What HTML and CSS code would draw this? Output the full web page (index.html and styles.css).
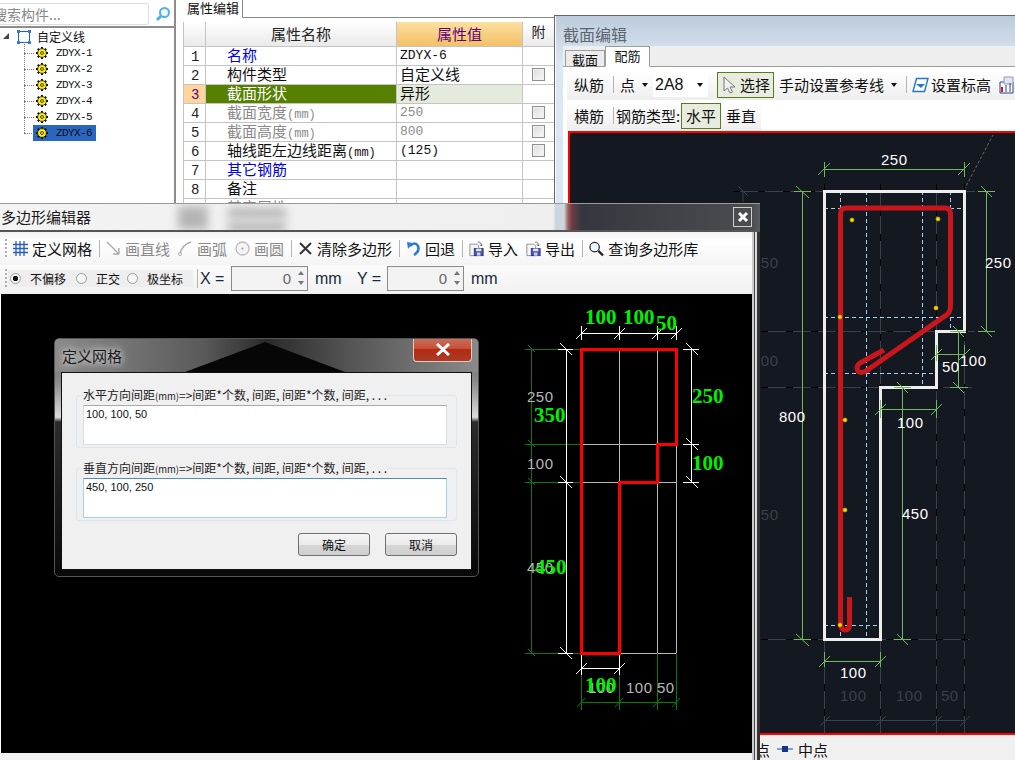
FILE: index.html
```html
<!DOCTYPE html>
<html lang="zh-CN">
<head>
<meta charset="utf-8">
<title>多边形编辑器</title>
<link rel="stylesheet" href="styles.css">
</head>
<body>
<svg class="defs" width="0" height="0" aria-hidden="true">
  <symbol id="gear" viewBox="0 0 12 12">
    <path d="M6 0V12M0 6H12M1.800 1.800L10.200 10.200M10.200 1.800L1.800 10.200" stroke="#111" stroke-width="2"/>
    <circle cx="6" cy="6" r="4.400" fill="#ffef00" stroke="#111" stroke-width=".8"/>
    <circle cx="6" cy="6" r="1.500" fill="#ffef00" stroke="#111" stroke-width=".8"/>
  </symbol>
  <symbol id="disk" viewBox="0 0 17 17">
    <path d="M1 3H9L11 5V16H1Z" fill="#f4f4f4" stroke="#8a8a8a"/>
    <rect x="6" y="8" width="10" height="8" fill="#4a55a8" stroke="#2c3478"/>
    <rect x="8" y="8" width="6" height="3" fill="#dfe3f5"/>
    <rect x="9" y="12.500" width="4" height="3.500" fill="#c9cde8"/>
    <path d="M10 1C13 0 14 2 14 5M14 5L12.500 3.500M14 5L15.500 3.500" fill="none" stroke="#555"/>
  </symbol>
</svg>

<section class="tree-panel">
  <div class="search-row">
    <div class="search-box">搜索构件...</div>
    <svg class="search-icon" width="16" height="16" viewBox="0 0 16 16"><circle cx="9.500" cy="6.500" r="4.500" fill="#eef8ff" stroke="#52b0e8" stroke-width="2"/><path d="M6 10L2 14" stroke="#52b0e8" stroke-width="3"/></svg>
  </div>
  <div class="tree">
    <div class="tree-root">
      <svg class="root-icon" width="16" height="16" viewBox="0 0 16 16"><rect x="2.500" y="2.500" width="11" height="11" fill="none" stroke="#1f5fc0"/><path d="M1 1h3v3H1zM12 1h3v3h-3zM1 12h3v3H1zM12 12h3v3h-3z" fill="#2f7be0"/></svg>
      <span>自定义线</span>
    </div>
    <ul class="tree-list">
      <li><svg width="12" height="12"><use href="#gear"/></svg><span>ZDYX-1</span></li>
      <li><svg width="12" height="12"><use href="#gear"/></svg><span>ZDYX-2</span></li>
      <li><svg width="12" height="12"><use href="#gear"/></svg><span>ZDYX-3</span></li>
      <li><svg width="12" height="12"><use href="#gear"/></svg><span>ZDYX-4</span></li>
      <li><svg width="12" height="12"><use href="#gear"/></svg><span>ZDYX-5</span></li>
      <li class="selected"><svg width="12" height="12"><use href="#gear"/></svg><span>ZDYX-6</span></li>
    </ul>
  </div>
</section>

<section class="prop-panel">
  <div class="prop-tabs"><div class="prop-tab">属性编辑</div></div>
  <table class="prop-table">
    <colgroup><col class="c-idx"><col class="c-name"><col class="c-val"><col class="c-att"></colgroup>
    <thead><tr><th></th><th>属性名称</th><th class="th-val">属性值</th><th class="th-att">附</th></tr></thead>
    <tbody>
      <tr><td class="idx">1</td><td class="name link">名称</td><td class="val mono">ZDYX-6</td><td></td></tr>
      <tr><td class="idx">2</td><td class="name">构件类型</td><td class="val">自定义线</td><td class="chk"><i></i></td></tr>
      <tr class="current"><td class="idx">3</td><td class="name">截面形状</td><td class="val">异形</td><td></td></tr>
      <tr class="muted"><td class="idx">4</td><td class="name">截面宽度<span class="unit-mm">(mm)</span></td><td class="val mono">250</td><td class="chk"><i></i></td></tr>
      <tr class="muted"><td class="idx">5</td><td class="name">截面高度<span class="unit-mm">(mm)</span></td><td class="val mono">800</td><td class="chk"><i></i></td></tr>
      <tr><td class="idx">6</td><td class="name">轴线距左边线距离<span class="unit-mm">(mm)</span></td><td class="val mono">(125)</td><td class="chk"><i></i></td></tr>
      <tr><td class="idx">7</td><td class="name link">其它钢筋</td><td class="val"></td><td></td></tr>
      <tr><td class="idx">8</td><td class="name">备注</td><td class="val"></td><td></td></tr>
      <tr class="muted"><td class="idx"></td><td class="name">其它属性</td><td class="val"></td><td></td></tr>
    </tbody>
  </table>
</section>

<section class="section-win">
  <header class="section-title">截面编辑</header>
  <div class="section-main">
    <div class="section-tabs">
      <div class="stab">截面</div>
      <div class="stab active">配筋</div>
    </div>
    <div class="stb stb-first">
      <span class="w-a">纵筋</span><i class="vsep sa"></i>
      <span class="w-b">点</span><i class="caret cb"></i>
      <div class="combo">2A8<i class="caret"></i></div>
      <div class="toggle tg-sel">
        <svg width="15" height="18" viewBox="0 0 15 18"><path d="M2 1V15L5.500 12L8 17L10.500 16L8 11H13Z" fill="#f1f1f1" stroke="#777"/></svg>
        <span>选择</span>
      </div>
      <span class="w-c">手动设置参考线</span><i class="caret cd"></i><i class="vsep se"></i>
      <svg class="ic-elev" width="17" height="16" viewBox="0 0 17 16"><path d="M4.500 1.500H16L12.500 14.500H1Z" fill="#fff" stroke="#1f78c8" stroke-width="1.400"/><path d="M4 7H13L9 11Z" fill="#1f78c8"/></svg>
      <span class="w-d">设置标高</span>
      <svg class="ic-last" width="15" height="18" viewBox="0 0 15 18"><path d="M1 6H14V17H1Z" fill="#fff" stroke="#22408a"/><path d="M5 1H14V8H5Z" fill="#dfe6f2" stroke="#99a"/><path d="M3 11V16" stroke="#d02020" stroke-width="2"/><path d="M7 9V16M11 7V16" stroke="#22408a"/></svg>
    </div>
    <div class="stb stb-second">
      <span class="w-a">横筋</span><i class="vsep sa2"></i>
      <span class="w-t">钢筋类型:</span>
      <div class="toggle tg-h">水平</div>
      <span class="w-v">垂直</span>
    </div>
    <div class="cad-frame">
      <svg class="cad" width="445" height="600" viewBox="570 133 445 600">
        <g class="axis">
          <path d="M733 191.500H975M761 331.500H975M761 387.500H972M761 639.500H970M824.500 184V733M880.500 184V733M936.500 184V733M964.500 184V733"/>
          <path d="M738 186L748 196M743 191V202"/>
          <path class="axis-diag" d="M964 190L993 135"/>
          <path class="axis-b" d="M733 191.500H975M761 331.500H975M761 387.500H972M761 639.500H970M824.500 184V733M880.500 184V733M936.500 184V733M964.500 184V733"/>
          <path d="M824 720.500H964M820 726L830 716M876 726L886 716M932 726L942 716M960 726L970 716"/>
        </g>
        <path class="hint" d="M824 208.500H964M824 317.500H964M824 373.500H936M824 625.500H880M840.500 191V208M866.500 191V639M922.500 191V387M950.500 191V331M840.500 625V639"/>
        <path class="rebar" d="M849.500 597V624Q849.500 630 845 630Q840.500 630 840.500 622V214Q840.500 208 846 208H945Q950.500 208 950.500 214V306Q950.500 313 945 316L866 371Q858 375 857 368Q857 365 860 363L884 350"/>
        <path class="outline" d="M824.500 191.500H964.500V331.500H936.500V387.500H880.500V639.500H824.500Z"/>
        <path class="dim" d="M824 169.500H964M824.500 162V177M964.500 162V177M818 175L830 163M958 175L970 163M802.500 191V639M794 191.500H811M794 639.500H811M796 186L809 198M796 634L809 646M986.500 191V331M978 191.500H995M978 331.500H995M981 186L992 197M981 326L992 337M958.500 331V387M950 331.500H966M950 387.500H968M953 326L964 337M953 382L964 393M936 354.500H964M936.500 345V361M964.500 345V362M931 360L942 349M959 360L970 349M880 409.500H936M880.500 400V418M936.500 400V418M875 415L886 404M931 415L942 404M902.500 388V639M894 387.500H911M894 639.500H911M897 382L908 393M897 634L908 645M824 661.500H880M824.500 652V667M880.500 652V667M819 667L830 656M875 667L886 656"/>
        <g class="pts">
          <circle cx="852" cy="220" r="2"/><circle cx="938" cy="219" r="2"/><circle cx="936" cy="308" r="2"/><circle cx="840" cy="317" r="2"/><circle cx="845" cy="420" r="2"/><circle cx="845" cy="510" r="2"/><circle cx="840" cy="625" r="2"/>
        </g>
        <g class="cad-t">
          <text x="881" y="165">250</text><text x="985" y="268">250</text><text x="942" y="372">50</text><text x="960" y="366">100</text><text x="897" y="428">100</text><text x="779" y="422">800</text><text x="902" y="519">450</text><text x="840" y="678">100</text>
        </g>
        <g class="cad-d">
          <text x="840" y="701">100</text><text x="896" y="701">100</text><text x="941" y="701">50</text><text x="752" y="268">250</text><text x="752" y="366">100</text><text x="752" y="520">450</text>
        </g>
      </svg>
    </div>
    <div class="section-foot">
      <span>点</span>
      <svg width="16" height="8" viewBox="0 0 16 8"><path d="M0 4H16" stroke="#7f9fd0" stroke-width="2"/><rect x="5" y="1" width="6" height="6" fill="#16348a"/></svg>
      <span>中点</span>
    </div>
  </div>
</section>

<section class="poly-win">
  <header class="poly-title">
    <span class="poly-name">多边形编辑器</span>
    <div class="glass g1"></div><div class="glass g2"></div><div class="glass g3"></div>
    <div class="poly-close"><svg width="12" height="12" viewBox="0 0 12 12"><path d="M2 2L10 10M10 2L2 10" stroke="#fff" stroke-width="3"/></svg></div>
  </header>
  <div class="poly-body">
    <div class="ptb ptb-1">
      <i class="grip"></i>
      <div class="tbtn"><svg width="15" height="15" viewBox="0 0 15 15"><path d="M0 3.500H15M0 7.500H15M0 11.500H15M3 0V15M7 0V15M11 0V15" stroke="#2a5cc0" stroke-width="1.300"/></svg><span>定义网格</span></div>
      <i class="vsep"></i>
      <div class="tbtn off"><svg width="15" height="15" viewBox="0 0 15 15"><path d="M1 1L13 13M13 13V7M13 13H7" fill="none" stroke="#aaa" stroke-width="1.400"/></svg><span>画直线</span></div>
      <div class="tbtn off"><svg width="15" height="15" viewBox="0 0 15 15"><path d="M2 14Q3 4 13 1" fill="none" stroke="#aaa" stroke-width="1.400"/><circle cx="2" cy="13" r="1.500" fill="#fff" stroke="#aaa"/></svg><span>画弧</span></div>
      <div class="tbtn off"><svg width="15" height="15" viewBox="0 0 15 15"><circle cx="7.500" cy="7.500" r="6.500" fill="#f4f4f4" stroke="#bbb" stroke-width="1.300"/><circle cx="7.500" cy="7.500" r="1" fill="#999"/></svg><span>画圆</span></div>
      <i class="vsep"></i>
      <div class="tbtn"><svg width="15" height="15" viewBox="0 0 15 15"><path d="M2 2L13 13M13 2L2 13" stroke="#333" stroke-width="2"/></svg><span>清除多边形</span></div>
      <i class="vsep"></i>
      <div class="tbtn"><svg width="15" height="15" viewBox="0 0 15 15"><path d="M4 5Q9 0 12 5Q14 10 8 14" fill="none" stroke="#2f7fd0" stroke-width="2.600"/><path d="M1 1L7 2L2 8Z" fill="#2f7fd0"/></svg><span>回退</span></div>
      <i class="vsep"></i>
      <div class="tbtn"><svg width="16" height="16"><use href="#disk"/></svg><span>导入</span></div>
      <div class="tbtn"><svg width="16" height="16"><use href="#disk"/></svg><span>导出</span></div>
      <i class="vsep"></i>
      <div class="tbtn"><svg width="16" height="16" viewBox="0 0 16 16"><circle cx="6" cy="6" r="5" fill="#eef6ff" stroke="#222" stroke-width="1.300"/><path d="M10 10L15 15" stroke="#222" stroke-width="2.400"/></svg><span>查询多边形库</span></div>
    </div>
    <div class="ptb ptb-2">
      <i class="grip"></i>
      <div class="radios">
        <label class="radio on"><i></i>不偏移</label>
        <label class="radio"><i></i>正交</label>
        <label class="radio"><i></i>极坐标</label>
      </div>
      <i class="vsep vs2"></i>
      <span class="coord cx">X =</span>
      <div class="spin">0<span class="arrows"><b></b><b></b></span></div>
      <span class="coord unit">mm</span>
      <span class="coord cy">Y =</span>
      <div class="spin">0<span class="arrows"><b></b><b></b></span></div>
      <span class="coord unit">mm</span>
    </div>
    <div class="poly-canvas">
      <svg class="poly-svg" width="751" height="460" viewBox="1 294 751 460">
        <path class="g-line" d="M619.500 349V653M657.500 349V653M676.500 349V653M581 444.500H676M581 482.500H676M581 653.500H676"/>
        <path class="g-dark" d="M531.500 349V653M525 349.500H581M525 444.500H581M525 482.500H581M525 653.500H581M528 345L535 352M528 440L535 447M528 478L535 485M528 649L535 656M581 702.500H676M581.500 653V710M619.500 653V710M657.500 653V710M676.500 653V710M577 707L585 698M615 707L623 698M653 707L661 698M672 707L680 698"/>
        <path class="g-white" d="M581 333.500H676M581.500 326V340M619.500 326V340M657.500 326V340M676.500 326V340M576 339L587 328M614 339L625 328M652 339L663 328M671 339L682 328M566.500 349V653M558 349.500H573M558 482.500H573M558 653.500H573M560 343L572 355M560 476L572 488M560 647L572 659M691.500 349V482M683 349.500H699M683 444.500H699M683 482.500H699M686 343L698 355M686 438L698 450M686 476L698 488M581 668.500H619M581.500 653V675M619.500 653V675M576 674L587 663M614 674L625 663"/>
        <path class="g-red" d="M581.500 349.500H676.500V444.500H657.500V482.500H619.500V653.500H581.500Z"/>
        <g class="t-grey">
          <text x="527" y="402">250</text><text x="527" y="469">100</text><text x="527" y="573">450</text><text x="588" y="693">100</text><text x="626" y="693">100</text><text x="657" y="693">50</text>
        </g>
        <g class="t-green">
          <text x="585" y="324">100</text><text x="623" y="324">100</text><text x="656" y="330">50</text><text x="692" y="403">250</text><text x="692" y="470">100</text><text x="534" y="422">350</text><text x="535" y="574">450</text><text x="585" y="692">100</text>
        </g>
      </svg>
    </div>
    <div class="poly-foot"></div>
  </div>
  <div class="poly-edge"></div>
</section>

<section class="grid-dlg">
  <header class="dlg-title">
    <span class="dlg-name">定义网格</span>
    <div class="dlg-close"><svg width="16" height="13" viewBox="0 0 16 13"><path d="M2 1L14 12M14 1L2 12" stroke="#fff" stroke-width="3"/></svg></div>
  </header>
  <div class="dlg-body">
    <fieldset class="group">
      <legend>水平方向间距<small>(mm)</small>=&gt;间距*个数, 间距, 间距*个数, 间距, . . .</legend>
      <div class="field">100, 100, 50</div>
    </fieldset>
    <fieldset class="group">
      <legend>垂直方向间距<small>(mm)</small>=&gt;间距*个数, 间距, 间距*个数, 间距, . . .</legend>
      <div class="field focus">450, 100, 250</div>
    </fieldset>
    <div class="dlg-actions">
      <button class="btn" type="button">确定</button>
      <button class="btn" type="button">取消</button>
    </div>
  </div>
</section>
</body>
</html>
```
FILE: styles.css
```css
* { box-sizing: border-box; }
html, body { margin: 0; padding: 0; }
body {
  position: relative;
  width: 1015px;
  height: 760px;
  overflow: hidden;
  background: #fff;
  font-family: "Noto Sans CJK SC", "Liberation Sans", sans-serif;
  font-size: 15px;
  line-height: 19px;
  color: #111;
}
i { font-style: normal; display: block; }
svg { display: block; flex: none; }
.defs { position: absolute; }

/* tree */
.tree-panel {
  position: absolute; left: 0; top: 0; width: 176px; height: 203px;
  border-right: 2px solid #8d8d8d;
  background: #fff;
}
.search-row {
  height: 28px; display: flex; align-items: flex-start;
  border-bottom: 2px solid #8d8d8d;
  padding-top: 3px;
}
.search-box {
  width: 149px; height: 22px; border: 1px solid #ddd; border-left: 0; border-radius: 0 3px 3px 0;
  color: #888; font-size: 14px; line-height: 20px; text-indent: -7px; white-space: nowrap; overflow: hidden;
}
.search-icon { margin: 3px 0 0 6px; }
.tree { position: relative; font-size: 12px; }
.tree-root { height: 18px; display: flex; align-items: center; padding-left: 16px; position: relative; }
.tree-root::before {
  content: ""; position: absolute; left: 3px; top: 5px;
  border-style: solid; border-width: 0 0 6px 6px; border-color: transparent transparent #444 transparent;
}
.root-icon { margin-right: 5px; }
.tree-root span { line-height: 16px; font-size: 12px; }
.tree-list {
  list-style: none; margin: -1px 0 0 24px; padding: 0; width: 72px;
  position: relative;
}
.tree-list::before {
  content: ""; position: absolute; left: 0; top: -3px; height: 91px;
  border-left: 1px dotted #777;
}
.tree-list li {
  height: 16px; display: flex; align-items: center; padding-left: 12px; position: relative;
  font: 11px/16px "Liberation Mono", monospace; letter-spacing: -.6px; color: #111;
}
.tree-list li::before {
  content: ""; position: absolute; left: 0; top: 8px; width: 10px;
  border-top: 1px dotted #777;
}
.tree-list li svg { margin-right: 8px; }
.tree-list li.selected { background: linear-gradient(90deg, transparent 9px, #2a66bf 9px); }

/* properties */
.prop-panel { position: absolute; left: 183px; top: 0; width: 372px; height: 203px; overflow: hidden; }
.prop-tabs { height: 18px; border-bottom: 1px solid #888; margin-bottom: 4px; }
.prop-tab {
  width: 60px; height: 18px; background: #fff; border-right: 1px solid #888; border-bottom: 1px solid #fff;
  font-size: 13px; line-height: 16px; padding-left: 4px; white-space: nowrap;
}
.prop-table { border-collapse: collapse; table-layout: fixed; width: 371px; border-left: 1px solid #ccc; }
.c-idx { width: 22px; } .c-name { width: 191px; } .c-val { width: 126px; } .c-att { width: 32px; }
.prop-table th {
  height: 24px; padding: 0; font-weight: 400; font-size: 15px; line-height: 19px;
  background: linear-gradient(#fff, #e9e9e9); border: 1px solid #c4c4c4; border-top: 0; color: #222;
}
.prop-table th.th-val { background: linear-gradient(#fbdf9f, #f3c066); color: #60007f; }
.prop-table th.th-att { vertical-align: top; font-size: 14px; }
.prop-table td {
  height: 19px; padding: 0 0 1px; border: 1px solid #c4c4c4; font-size: 15px; line-height: 16px;
  white-space: nowrap;
}
.prop-table .idx { font: 14px/14px "Liberation Mono", monospace; padding: 3px 0 0 7px; color: #222; }
.prop-table .name { padding-left: 21px; }
.prop-table .val { padding-left: 3px; }
.prop-table .val.mono { font: 13px/16px "Liberation Mono", monospace; padding-top: 1px; padding-bottom: 0; }
.unit-mm { font: 12px/0 "Liberation Mono", monospace; }
.prop-table .link { color: #0000e6; }
.muted .name, .muted .val, .prop-table .muted .val.mono { color: #8a8a8a; }
.current .idx { background: #ffd699; color: #60007f; }
.current .name { background: #558000; color: #fff; }
.current .val { background: #e5ebdc; }
.chk i {
  width: 13px; height: 13px; margin: 1px auto 0 9px;
  border: 1px solid #8e8f8f; background: linear-gradient(135deg, #ddd, #f8f8f8);
  box-shadow: inset 0 0 0 1px #f0f0f0;
}

/* section window */
.section-win {
  position: absolute; left: 554px; top: 15px; width: 461px; height: 745px;
  border-top: 1px solid #666; border-left: 1px solid #666;
  background: linear-gradient(#bccbdb 0, #dbe7f2 46px, #dbe7f2 100%);
  display: flex; flex-direction: column;
  box-shadow: inset 1px 0 0 #fff;
}
.section-title { height: 30px; flex: none; padding: 8px 0 0 8px; color: #5c6670; font-size: 16px; line-height: 20px; }
.section-main { margin-left: 8px; flex: 1; min-height: 0; background: #fff; display: flex; flex-direction: column; }
.section-tabs {
  height: 21px; flex: none; display: flex; align-items: flex-end; padding-left: 2px;
  background: #eee; border-bottom: 1px solid #9a9f9a;
}
.stab {
  width: 40px; height: 17px; margin-bottom: -1px; text-align: center; font-size: 13px; line-height: 17px;
  border: 1px solid #9a9f9a; background: #ececec;
}
.stab.active { width: 45px; height: 21px; margin-left: 0; background: #fff; border-bottom-color: #fff; line-height: 17px; }
.stb { height: 29px; flex: none; display: flex; align-items: center; padding: 0 0 2px 7px; white-space: nowrap; background: linear-gradient(#fff, #eee); margin-left: 4px; }
.stb-first { margin-top: 4px; margin-bottom: 2px; }
.stb-second { width: 194px; }
.vsep { width: 1px; height: 17px; background: #b4b4b4; flex: none; }
.caret { width: 0; height: 0; border: 3px solid transparent; border-top: 4px solid #111; border-bottom: 0; flex: none; }
.w-a { width: 30px; }
.sa { margin: 0 6px 0 9px; }
.w-b { width: 15px; }
.cb { margin: 0 5px 0 7px; }
.combo {
  width: 55px; height: 24px; background: #fff; display: flex; align-items: center; justify-content: space-between;
  font-family: "Liberation Sans", sans-serif; font-size: 16px; padding: 0 5px 0 2px; margin-right: 9px;
}
.toggle { border: 2px solid #5a7a1e; border-width: 1.500px; background: #e8ecdf; display: flex; align-items: center; height: 26px; }
.tg-sel { width: 57px; padding-left: 4px; }
.tg-sel span { margin-left: 3px; }
.w-c { margin-left: 5px; width: 106px; }
.cd { margin: 0 6px 0 6px; }
.se { margin: 0 5px 0 3px; }
.ic-elev { margin-right: 2px; }
.w-d { width: 60px; }
.ic-last { margin-left: 8px; }
.sa2 { margin: 0 2px 0 9px; }
.w-t { width: 64px; }
.tg-h { width: 40px; justify-content: center; margin-left: 1px; }
.w-v { margin-left: 5px; }
.cad-frame { flex: none; height: 604px; background: #141820; border: 2px solid #f00; border-right: 0; margin-left: 5px; }
.cad { background: #141820; }
.axis path { fill: none; stroke: #3a4048; }
.axis .axis-b { stroke: #000; stroke-dasharray: 7 18; }
.axis .axis-diag { stroke: #666; stroke-dasharray: 3 2; }
.hint { fill: none; stroke: #a6d0f2; stroke-dasharray: 4 3; }
.rebar { fill: none; stroke: #c8161c; stroke-width: 5; }
.outline { fill: none; stroke: #eeeeee; stroke-width: 3; }
.dim { fill: none; stroke: #71b85c; }
.pts circle { fill: #ffe000; stroke: #b89a00; stroke-width: .8; }
.cad-t text, .cad-d text { font: 15px "Liberation Sans", sans-serif; letter-spacing: .5px; }
.cad-t text { fill: #fff; }
.cad-d text { fill: #3a4048; }
.section-foot {
  flex: 1; background: #f0f0f0; display: flex; align-items: center; padding: 3px 0 0 192px; gap: 7px; white-space: nowrap;
}
.section-foot svg { margin-right: -2px; }

/* polygon window */
.poly-win {
  position: absolute; left: 0; top: 203px; width: 760px; height: 557px;
  display: grid; grid-template-columns: 752px 8px; grid-template-rows: 29px 1fr;
}
.poly-title {
  grid-column: 1 / 3; position: relative; display: flex; align-items: center; justify-content: space-between;
  border-top: 1px solid #9a9a9a; border-bottom: 2px solid #555; padding: 0 8px 0 1px; overflow: hidden;
  background: linear-gradient(90deg, #f3f3f3 0, #efefef 553px, #c8d4de 556px, #d0d8e0 564px, #a06060 568px, #6a3c44 572px, #34383e 582px, #4a4d50 752px, #5a5d60 760px);
}
.poly-name { position: relative; line-height: 20px; color: #1a1a1a; }
.glass { position: absolute; background: #b5b5b5; filter: blur(5px); }
.g1 { left: 178px; top: 2px; width: 30px; height: 24px; }
.g2 { left: 228px; top: 4px; width: 58px; height: 10px; }
.g3 { left: 228px; top: 18px; width: 58px; height: 10px; }
.poly-close {
  position: relative; width: 19px; height: 20px; display: flex; align-items: center; justify-content: center;
  background: #4a4d50; border: 1px solid #cfcfcf;
}
.poly-body { display: flex; flex-direction: column; min-height: 0; background: #fff; }
.ptb { flex: none; display: flex; align-items: center; white-space: nowrap; }
.ptb-1 { height: 33px; padding: 0 0 0 5px; background: linear-gradient(#f1f1f1, #fff 30%, #f4f4f4); }
.ptb-2 { height: 29px; padding: 0 0 2px 5px; background: linear-gradient(#fbfbfb, #f1f1f1); }
.grip { width: 2px; height: 20px; background: repeating-linear-gradient(#b0b0b0 0 2px, transparent 2px 4px); flex: none; }
.ptb-1 .grip { margin-right: 6px; }
.ptb-1 .vsep { height: 17px; margin: 0 6px 0 -1px; }
.tbtn { display: flex; align-items: center; gap: 4px; margin-right: 8px; }
.tbtn svg { width: 15px; }
.tbtn.off span { color: #8a8a8a; }
.radios { display: flex; align-items: center; width: 185px; height: 17px; margin-left: 1px; background: #eeeeee; font-size: 12px; line-height: 17px; padding-left: 2px; }
.radio { display: flex; align-items: center; }
.radio i { width: 11px; height: 11px; border-radius: 50%; border: 1px solid #9a9a9a; background: #f6f6f6; margin-right: 9px; }
.radio.on i { background: radial-gradient(circle, #111 0 2.500px, #f6f6f6 3px); }
.radio + .radio { margin-left: 10px; }
.radio + .radio + .radio { margin-left: 7px; }
.vs2 { margin-left: 4px; height: 19px; }
.coord { font-family: "Liberation Sans", sans-serif; font-size: 16px; color: #1a2a3a; }
.cx { margin-left: 2px; width: 31px; }
.cy { margin-left: 15px; width: 30px; }
.unit { margin-left: 7px; width: 27px; }
.spin {
  width: 77px; height: 25px; border: 1px solid #8a8a8a; background: #f3f3f3; position: relative;
  text-align: right; padding-right: 16px; line-height: 23px; color: #666; font-family: "Liberation Sans", sans-serif; font-size: 15px;
}
.arrows { position: absolute; right: 3px; top: 4px; display: flex; flex-direction: column; gap: 6px; }
.arrows b { width: 0; height: 0; border: 3px solid transparent; border-bottom: 4px solid #777; border-top: 0; }
.arrows b + b { border-bottom: 0; border-top: 4px solid #777; }
.poly-canvas { flex: none; height: 459px; background: #000; overflow: hidden; margin-left: 1px; }
.poly-svg { background: #000; }
.poly-foot { flex: 1; background: #f2f2f2; }
.poly-edge { background: linear-gradient(90deg, #ccc 0 2px, #444 2px 3px, #ddd 3px 5px, #333 5px); }
.g-line { fill: none; stroke: #b8b8b8; }
.g-dark { fill: none; stroke: #0a7a0a; }
.g-white { fill: none; stroke: #fff; }
.g-red { fill: none; stroke: #f00; stroke-width: 3; }
.t-grey text { font: 15px "Liberation Sans", sans-serif; letter-spacing: .5px; fill: #b8b8b8; }
.t-green text { font: bold 21px "Liberation Serif", serif; fill: #00f000; }

/* dialog */
.grid-dlg {
  position: absolute; left: 54px; top: 338px; width: 425px; height: 239px;
  border-radius: 5px; padding: 0; overflow: hidden;
  border: 1px solid #555;
  background: linear-gradient(#666 0, #8a8a8a 18%, #dcdcdc 33%, #2c2c2c 35%, #080808 100%);
  display: flex; flex-direction: column;
}
.dlg-title {
  height: 33px; flex: none; position: relative; display: flex; justify-content: space-between; align-items: flex-start;
  background: linear-gradient(90deg, #8a8a8a 0, #5a5a5a 35%, #2a2a2a 50%, #555 70%, #8a8a8a 100%);
}
.dlg-title::before {
  content: ""; position: absolute; left: 130px; top: 3px; width: 160px; height: 30px;
  background: #060606; clip-path: polygon(0 100%, 50% 0, 100% 100%);
}
.dlg-name {
  position: relative; margin: 7px 0 0 7px; line-height: 20px; color: #1a1a1a;
  text-shadow: 0 0 6px #ddd, 0 0 10px #ddd;
}
.dlg-close {
  position: relative; width: 59px; height: 24px; margin: -1px 6px 0 0;
  border: 1px solid #e6c8c0; border-top: 0; border-radius: 0 0 4px 4px;
  background: linear-gradient(#c8705c 0, #c8503a 45%, #b62a10 50%, #a83c2a 100%);
  display: flex; align-items: center; justify-content: center;
}
.dlg-body { flex: 1; margin: 0 6px 6px; border: 1px solid #111; background: #f0f0f0; padding: 17px 14px 0 14px; }
.group {
  margin: 0 0 15px; padding: 0 9px 7px 6px; height: 58px; min-width: 0;
  border: 1px solid #dbe6ee; border-radius: 3px; position: relative;
}
.group legend {
  padding: 0; margin-left: 0; font-size: 12px; line-height: 10px; height: 10px; white-space: nowrap; color: #222; background: #f0f0f0;
}
.group legend small { font-size: 9.500px; }
.field {
  height: 40px; margin-top: 5px; background: #fff; border: 1px solid #ddd; border-top-color: #aaa;
  font: 11px/17px "Liberation Sans", sans-serif; padding: 0 2px; color: #111;
}
.field.focus { border-color: #a8d0ea; border-top-color: #4f8fbf; }
.dlg-actions { display: flex; justify-content: flex-end; gap: 15px; margin-top: -3px; }
.btn {
  width: 72px; height: 23px; padding: 0; border: 1px solid #707070; border-radius: 3px;
  background: linear-gradient(#f4f4f4 0, #ebebeb 50%, #d6d6d6 52%, #cfcfcf 100%);
  font: 12px/20px "Noto Sans CJK SC", sans-serif; color: #111;
}
```
